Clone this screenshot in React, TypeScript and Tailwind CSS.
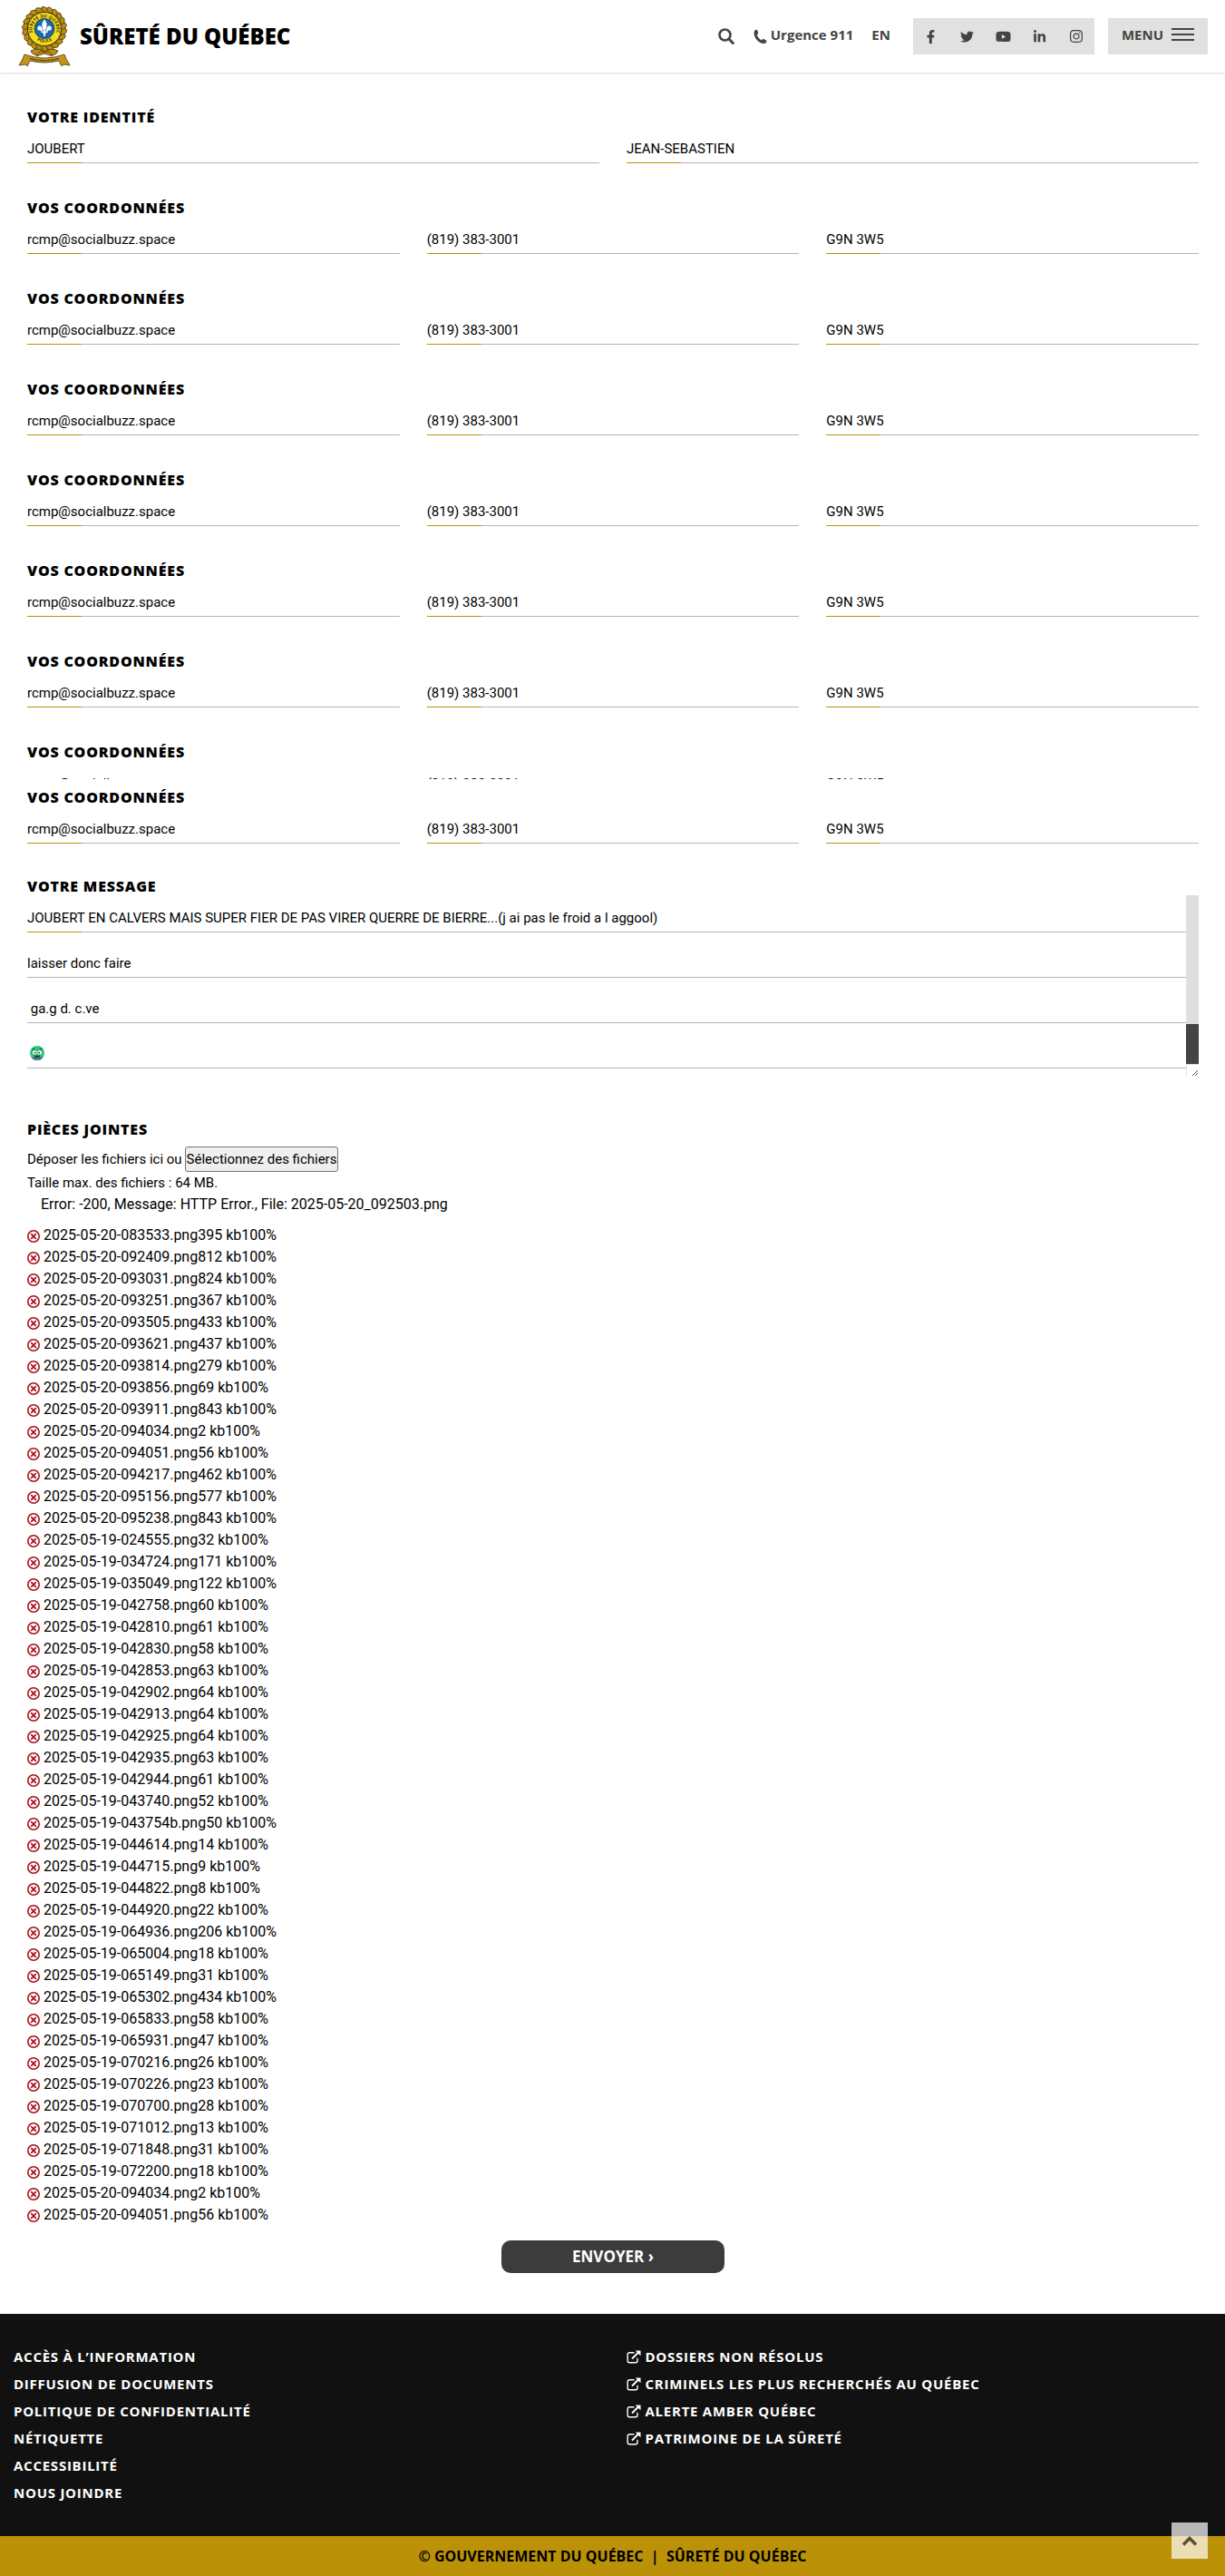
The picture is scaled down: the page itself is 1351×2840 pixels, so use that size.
import { useState } from 'react';
import type { ReactNode } from 'react';
import {
  FaFacebookF,
  FaTwitter,
  FaYoutube,
  FaLinkedinIn,
  FaInstagram,
} from 'react-icons/fa';

const FILES: [string, number][] = [
  ['2025-05-20-083533.png', 395],
  ['2025-05-20-092409.png', 812],
  ['2025-05-20-093031.png', 824],
  ['2025-05-20-093251.png', 367],
  ['2025-05-20-093505.png', 433],
  ['2025-05-20-093621.png', 437],
  ['2025-05-20-093814.png', 279],
  ['2025-05-20-093856.png', 69],
  ['2025-05-20-093911.png', 843],
  ['2025-05-20-094034.png', 2],
  ['2025-05-20-094051.png', 56],
  ['2025-05-20-094217.png', 462],
  ['2025-05-20-095156.png', 577],
  ['2025-05-20-095238.png', 843],
  ['2025-05-19-024555.png', 32],
  ['2025-05-19-034724.png', 171],
  ['2025-05-19-035049.png', 122],
  ['2025-05-19-042758.png', 60],
  ['2025-05-19-042810.png', 61],
  ['2025-05-19-042830.png', 58],
  ['2025-05-19-042853.png', 63],
  ['2025-05-19-042902.png', 64],
  ['2025-05-19-042913.png', 64],
  ['2025-05-19-042925.png', 64],
  ['2025-05-19-042935.png', 63],
  ['2025-05-19-042944.png', 61],
  ['2025-05-19-043740.png', 52],
  ['2025-05-19-043754b.png', 50],
  ['2025-05-19-044614.png', 14],
  ['2025-05-19-044715.png', 9],
  ['2025-05-19-044822.png', 8],
  ['2025-05-19-044920.png', 22],
  ['2025-05-19-064936.png', 206],
  ['2025-05-19-065004.png', 18],
  ['2025-05-19-065149.png', 31],
  ['2025-05-19-065302.png', 434],
  ['2025-05-19-065833.png', 58],
  ['2025-05-19-065931.png', 47],
  ['2025-05-19-070216.png', 26],
  ['2025-05-19-070226.png', 23],
  ['2025-05-19-070700.png', 28],
  ['2025-05-19-071012.png', 13],
  ['2025-05-19-071848.png', 31],
  ['2025-05-19-072200.png', 18],
  ['2025-05-20-094034.png', 2],
  ['2025-05-20-094051.png', 56],
];

const MESSAGE = `JOUBERT EN CALVERS MAIS SUPER FIER DE PAS VIRER QUERRE DE BIERRE...(j ai pas le froid a l aggool)
laisser donc faire
 ga.g d. c.ve
`;

const SOCIAL = [
  { name: 'Facebook', icon: <FaFacebookF size={15} /> },
  { name: 'Twitter', icon: <FaTwitter size={15} /> },
  { name: 'YouTube', icon: <FaYoutube size={17} /> },
  { name: 'LinkedIn', icon: <FaLinkedinIn size={15} /> },
  { name: 'Instagram', icon: <FaInstagram size={16} /> },
];

const LINKS = [
  'Accès à l’information',
  'Diffusion de documents',
  'Politique de confidentialité',
  'Nétiquette',
  'Accessibilité',
  'Nous joindre',
];

const EXTERNAL_LINKS = [
  'Dossiers non résolus',
  'Criminels les plus recherchés au Québec',
  'Alerte Amber Québec',
  'Patrimoine de la Sûreté',
];

const LEAVES = Array.from({ length: 22 }, (_, i) => i * (360 / 22));

const Crest = () => (
  <svg width="58" height="68" viewBox="0 0 58 68" aria-hidden="true">
    <g fill="#b98d12" stroke="#4a390c" strokeWidth="0.8">
      {LEAVES.map((deg) => (
        <ellipse
          key={deg}
          cx="29"
          cy="4.5"
          rx="4"
          ry="2.6"
          transform={`rotate(${deg} 29 26) rotate(28 29 4.5)`}
        />
      ))}
      <path d="M14 50 Q22 46 29 51 Q36 46 44 50 Q42 56 35 54 L29 52 L23 54 Q16 56 14 50Z" />
      <path d="M20 56 Q24 48 29 52 Q34 48 38 56 L29 53Z" />
    </g>
    <circle cx="29" cy="26" r="18.5" fill="#f5dc1e" stroke="#3a3008" />
    <path id="crest-ring" d="M16.5 32 A13.5 13.5 0 1 1 41.5 32" fill="none" />
    <path id="crest-base" d="M15 33 A16.5 16.5 0 0 0 43 33" fill="none" />
    <g fontFamily="Open Sans, sans-serif" fontWeight="700" fontSize="5" fill="#3a3008">
      <text textAnchor="middle">
        <textPath href="#crest-ring" startOffset="50%">
          SÛRETÉ DU QUÉBEC
        </textPath>
      </text>
      <text textAnchor="middle">
        <textPath href="#crest-base" startOffset="50%">
          POLICE
        </textPath>
      </text>
    </g>
    <circle cx="29" cy="25.5" r="11" fill="#1668b0" stroke="#3a3008" strokeWidth="0.8" />
    {/* fleur-de-lis */}
    <g fill="#fff">
      <path d="M29 15.500 C32 19 32.500 22 30.200 27 L30.200 32 L29 35 L27.800 32 L27.800 27 C25.500 22 26 19 29 15.500Z" />
      <path d="M31 28 C31 23 34.500 21 36.500 24 C37.500 26.500 35.500 28.500 33.800 27 C33.500 28.500 32.500 29 31 28Z" />
      <path d="M27 28 C27 23 23.500 21 21.500 24 C20.500 26.500 22.500 28.500 24.200 27 C24.500 28.500 25.500 29 27 28Z" />
      <path d="M25.500 28.500h7v1.500h-7z" />
    </g>
    <path
      d="M7 54 Q29 62 51 54 L53 59 L57 66 L50 65 L48 67 L45 61 Q29 65 13 61 L10 67 L8 65 L1 66 L5 59Z"
      fill="#c4951a"
      stroke="#4a390c"
      strokeWidth="0.8"
    />
    <path d="M13 58.500 Q29 63 45 58.500" fill="none" stroke="#4a390c" strokeWidth="1.600" strokeDasharray="1.500 0.700" />
  </svg>
);

const SearchIcon = () => (
  <svg width="18" height="18" viewBox="0 0 18 18" fill="none" stroke="currentColor" aria-hidden="true">
    <circle cx="7.500" cy="7.500" r="6" strokeWidth="2.600" />
    <path d="M12 12l4.300 4.500" strokeWidth="3" strokeLinecap="round" />
  </svg>
);

const PhoneIcon = () => (
  <svg width="15" height="17" viewBox="0 0 15 17" fill="currentColor" className="mt-1" aria-hidden="true">
    <path d="M2.600 0.800 C1 1.500 0.300 3.500 0.600 5.500 C1.300 10.500 5.500 15 10.500 16 C12.500 16.300 14 15.400 14.400 13.800 C14.600 13 14.400 12.700 13.800 12.400 L11.300 11 C10.700 10.700 10.200 10.900 9.800 11.500 C9.300 12.200 8.900 12.300 8.200 11.900 C6.300 10.800 4.800 8.900 4.100 6.900 C3.900 6.200 4 5.900 4.700 5.500 C5.300 5.200 5.400 4.800 5.200 4.100 L4.300 1.400 C4 0.700 3.500 0.500 2.600 0.800Z" />
  </svg>
);

const ExternalIcon = () => (
  <svg width="16" height="15" viewBox="0 0 16 15" fill="none" stroke="currentColor" aria-hidden="true">
    <path d="M8.500 2.700H3.200A2 2 0 0 0 1.200 4.700V11.800A2 2 0 0 0 3.200 13.800H10A2 2 0 0 0 12 11.800V8.800" strokeWidth="1.400" />
    <path d="M6 9.500L13 2.500" strokeWidth="2" />
    <path d="M9.800 0.500H15.500V6.200L13.600 4.400L11.600 2.400Z" fill="currentColor" stroke="none" />
  </svg>
);

const DeleteIcon = () => (
  <svg width="14" height="14" viewBox="0 0 14 14" fill="none" stroke="currentColor" aria-hidden="true">
    <circle cx="7" cy="7" r="6.200" strokeWidth="1.600" />
    <path d="M4.200 4.200l5.600 5.600M9.800 4.200l-5.600 5.600" strokeWidth="1.800" />
  </svg>
);

const GreenFace = () => (
  <svg width="16" height="16" viewBox="0 0 16 16" aria-hidden="true">
    <circle cx="8" cy="8" r="8" fill="#2fc47c" />
    <path d="M1 12 A8 8 0 0 0 15 12 Q8 15 1 12Z" fill="#4a7f9c" />
    <path d="M2.500 4.500 L5 2.500 M13.500 4.500 L11 2.500" stroke="#0f6b45" strokeWidth="1.200" />
    <circle cx="5.300" cy="7.500" r="2.300" fill="#fff" />
    <circle cx="10.700" cy="7.500" r="2.300" fill="#fff" />
    <circle cx="5.800" cy="7.700" r="0.900" fill="#333" />
    <circle cx="10.200" cy="7.700" r="0.900" fill="#333" />
    <path d="M4.500 13.500 L8 11 L11.500 13.500 M5 10.500 L8 12.500 L11 10.500" fill="none" stroke="#3a3040" strokeWidth="1.200" />
  </svg>
);

const Title = ({ children }: { children: ReactNode }) => (
  <h2 className="font-['Open_Sans',sans-serif] text-base leading-5 font-extrabold tracking-wider uppercase">
    {children}
  </h2>
);

const Field = ({ label, value, type = 'text' }: { label: string; value: string; type?: string }) => (
  <input
    type={type}
    aria-label={label}
    defaultValue={value}
    className="h-[41px] w-full min-w-0 flex-1 bg-[linear-gradient(#bb9207,#bb9207),linear-gradient(#b5b5b5,#b5b5b5)] bg-[length:60px_1px,100%_1px] bg-bottom-left bg-no-repeat pt-2 outline-none"
  />
);

const Contact = () => (
  <section>
    <Title>Vos coordonnées</Title>
    <div className="flex gap-[30px]">
      <Field label="Courriel" type="email" value="rcmp@socialbuzz.space" />
      <Field label="Téléphone" type="tel" value="(819) 383-3001" />
      <Field label="Code postal" value="G9N 3W5" />
    </div>
  </section>
);

const Header = () => (
  <header className="flex h-20 items-center justify-between pr-[19px] pl-5 shadow-[0_1px_2px_rgba(0,0,0,0.15)]">
    <a href="#" className="flex items-center gap-[10px]">
      <Crest />
      <span className="font-['Open_Sans',sans-serif] text-2xl font-extrabold">SÛRETÉ DU QUÉBEC</span>
    </a>
    <div className="flex items-center font-['Open_Sans',sans-serif] text-[15px] font-bold text-[#444]">
      <button type="button" aria-label="Rechercher" className="mr-[21px]">
        <SearchIcon />
      </button>
      <a href="#" className="mr-5 flex items-center gap-1 pb-1">
        <PhoneIcon />
        Urgence 911
      </a>
      <a href="#" className="mr-[25px] pb-1">
        EN
      </a>
      <nav className="mr-[15px] flex h-10 bg-[#e1e1e1]">
        {SOCIAL.map((item) => (
          <a key={item.name} href="#" aria-label={item.name} className="flex w-10 items-center justify-center">
            {item.icon}
          </a>
        ))}
      </nav>
      <button type="button" className="flex h-10 items-center gap-[9px] bg-[#e1e1e1] px-[15px] pb-1">
        MENU
        <span className="flex w-[25px] flex-col gap-1">
          <span className="h-[2px] bg-[#444]" />
          <span className="h-[2px] bg-[#444]" />
          <span className="h-[2px] bg-[#444]" />
        </span>
      </button>
    </div>
  </header>
);

const Message = () => {
  const [message, setMessage] = useState<string>(MESSAGE);

  return (
    <section>
      <Title>Votre message</Title>
      <div className="relative flex h-[200px]">
        <textarea
          aria-label="Votre message"
          value={message}
          onChange={(e) => setMessage(e.target.value)}
          className="h-full flex-1 resize-none overflow-hidden bg-[linear-gradient(#bb9207,#bb9207),repeating-linear-gradient(transparent_0_40px,#b5b5b5_40px_41px,transparent_41px_50px)] bg-[length:60px_1px,100%_100%] bg-[position:0_40px,0_0] bg-no-repeat leading-[50px] outline-none"
        />
        <div className="flex w-[14px] flex-col bg-[#dfdfdf]">
          <div className="flex-1" />
          <div className="h-11 bg-[#444]" />
          <svg width="14" height="14" viewBox="0 0 14 14" aria-hidden="true">
            <path d="M1 1h13v13H1z" fill="#fff" />
            <path d="M7 13l6-6M10 13l3-3" stroke="#555" />
          </svg>
        </div>
        <div className="absolute bottom-[18px] left-[3px]">
          <GreenFace />
        </div>
      </div>
    </section>
  );
};

const Attachments = () => (
  <section>
    <Title>Pièces jointes</Title>
    <p className="mt-[9px] flex h-7 items-center gap-[3px]">
      Déposer les fichiers ici ou
      <button type="button" className="h-full rounded-[3px] border border-[#767676] bg-[#efefef] px-px">
        Sélectionnez des fichiers
      </button>
    </p>
    <p>Taille max. des fichiers : 64 MB.</p>
    <p className="pl-[15px] text-base">Error: -200, Message: HTTP Error., File: 2025-05-20_092503.png</p>
    <ul className="mt-[10px] text-base">
      {FILES.map(([name, size], i) => (
        <li key={i} className="flex items-center gap-1">
          <button type="button" aria-label="Supprimer" className="pt-[2px] text-[#a9121f]">
            <DeleteIcon />
          </button>
          <span>
            {name}
            {size} kb100%
          </span>
        </li>
      ))}
    </ul>
  </section>
);

const Footer = () => (
  <footer className="font-['Open_Sans',sans-serif] font-bold">
    <div className="grid grid-cols-2 bg-[#111] px-[15px] pt-8 pb-[33px] text-[15px] leading-[30px] tracking-wider text-white uppercase">
      <ul>
        {LINKS.map((link) => (
          <li key={link}>
            <a href="#">{link}</a>
          </li>
        ))}
      </ul>
      <ul className="pl-[15px]">
        {EXTERNAL_LINKS.map((link) => (
          <li key={link}>
            <a href="#" className="flex items-center gap-[5px]">
              <ExternalIcon />
              {link}
            </a>
          </li>
        ))}
      </ul>
    </div>
    <p className="bg-[#bb9207] text-center text-base leading-[44px] whitespace-pre">
      © GOUVERNEMENT DU QUÉBEC{'  |  '}SÛRETÉ DU QUÉBEC
    </p>
  </footer>
);

const App: React.FC = () => {
  return (
    <div className="relative bg-white font-[Roboto,sans-serif] text-[15px] leading-6 text-black">
      <Header />
      <form className="pt-[39px] pr-[29px] pl-[30px]" onSubmit={(e) => e.preventDefault()}>
        <div className="flex flex-col gap-[39px]">
          <section>
            <Title>Votre identité</Title>
            <div className="flex gap-[30px]">
              <Field label="Nom" value="JOUBERT" />
              <Field label="Prénom" value="JEAN-SEBASTIEN" />
            </div>
          </section>
          <Contact />
          <Contact />
          <Contact />
          <Contact />
          <Contact />
          <Contact />
          <div className="h-10 overflow-hidden">
            <Contact />
          </div>
        </div>
        <div className="mt-[10px] flex flex-col gap-[37px]">
          <Contact />
          <Message />
        </div>
        <div className="mt-[48px]">
          <Attachments />
        </div>
        <button
          type="submit"
          className="mx-auto mt-4 mb-[45px] block h-9 w-[246px] rounded-[10px] bg-[#3c3c3c] font-['Open_Sans',sans-serif] text-[17px] font-bold text-white"
        >
          ENVOYER ›
        </button>
      </form>
      <Footer />
      <a
        href="#"
        aria-label="Haut de page"
        className="absolute right-[19px] bottom-[19px] flex h-10 w-10 items-center justify-center bg-white/70"
      >
        <svg width="18" height="11" viewBox="0 0 18 11" fill="none" aria-hidden="true">
          <path d="M2 9.500 L9 2.500 L16 9.500" stroke="#5b512f" strokeWidth="3.500" />
        </svg>
      </a>
    </div>
  );
};

export default App;
